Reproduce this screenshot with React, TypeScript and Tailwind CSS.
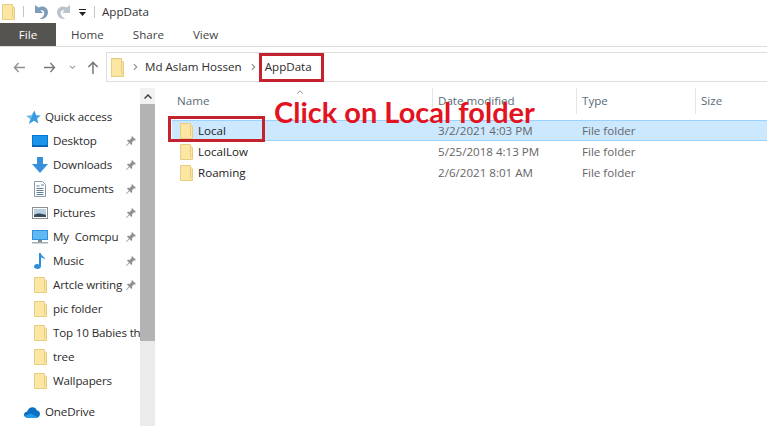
import React from "react";

const Folder = ({ className = "" }: { className?: string }) => (
  <svg viewBox="0 0 13 16" preserveAspectRatio="none" className={className}>
    <path d="M.5.5h10v2l2 1v12H.5z" fill="#fbe7a3" stroke="#e8cd80" />
    <path d="M10.500 2.500v10l2 1" stroke="#e8cd80" fill="none" />
  </svg>
);

const Pin = () => (
  <svg viewBox="0 0 12 12" className="w-[12px] h-[12px]">
    <path d="M7 1l4 4-1 .6-1-.3-2 2 .2 2L6.400 10 4.500 8 1.500 11 1 10.500 4 7.500 2 5.600l.7-.8 2 .2 2-2-.3-1z" fill="#8f8f8f" />
  </svg>
);

const Desktop = () => (
  <svg viewBox="0 0 16 12" className="w-4 h-3">
    <rect width="16" height="12" fill="#0078d7" />
    <rect x="1" y="1" width="14" height="9" fill="#1a94e8" />
    <rect x="0" y="10.500" width="16" height="1.500" fill="#0a5fa8" />
  </svg>
);
const Downloads = () => (
  <svg viewBox="0 0 16 16" className="w-4 h-4">
    <path d="M5 0h6v7h5l-8 9-8-9h5z" fill="#3a8fdc" />
  </svg>
);
const Documents = () => (
  <svg viewBox="0 0 12 16" className="w-3 h-4">
    <path d="M.5.5h8l3 3v12H.5z" fill="#fff" stroke="#8a9aa8" />
    <path d="M2.500 5h3M2.500 7.500h7M2.500 9.500h7M2.500 11.500h7M2.500 13.500h7M7 4h3" stroke="#5d7f98" />
  </svg>
);
const Pictures = () => (
  <svg viewBox="0 0 16 12" className="w-4 h-3">
    <rect x=".5" y=".5" width="15" height="11" fill="#fff" stroke="#8a8f94" />
    <rect x="2" y="2" width="12" height="8" fill="#b9cfe2" />
    <path d="M2 8c3-2 6-2 12 0v2H2z" fill="#3b4a58" />
  </svg>
);
const Computer = () => (
  <svg viewBox="0 0 16 14" className="w-4 h-[14px]">
    <rect width="16" height="10" fill="#2f8fdc" />
    <rect x="1" y="1" width="14" height="8" fill="#62b8f0" />
    <rect x="6" y="10" width="4" height="2" fill="#7d8b96" />
    <rect x="0" y="12" width="16" height="1.500" fill="#a0adb6" />
  </svg>
);
const Music = () => (
  <svg viewBox="0 0 12 16" className="w-3 h-4">
    <path d="M5 0h1.800c.2 3 4.200 3.500 4.200 7-1-1.500-2.500-2.500-4-2.500V13c0 2-1.500 3-3.500 3S0 15 0 13.500 1.500 11 3 11c.8 0 1.500.2 2 .6z" fill="#2b8fdc" />
  </svg>
);
const Star = () => (
  <svg viewBox="0 0 16 16" className="w-[15px] h-[15px]">
    <path d="M9 .5l1.800 5 5 .3-4 3.200 1.400 5.500L8.500 11.500 3 15l1.800-5.500L.5 6.300l5.500-.5z" fill="#3a9be0" />
    <path d="M9 .5L6 5.800.5 6.300 4.800 9.500 3 15z" fill="#6fb9ea" />
  </svg>
);
const Cloud = () => (
  <svg viewBox="0 0 17 11" className="w-4 h-[11px]">
    <path d="M4 11C1.500 11 0 9.500 0 7.800 0 6 1.500 4.800 3.300 4.800 4 2 6.300 0 9 0c2.300 0 4 1.300 4.800 3.500 1.800.2 3.200 1.700 3.200 3.700S15.500 11 13.500 11z" fill="#0d6fc4" />
    <path d="M4 11C2 11 1 10 .6 9.200L7 6.500l8 4a3 3 0 0 1-1.500.5z" fill="#1f9ce8" />
  </svg>
);
const Undo = ({ color, className = "" }: { color: string; className?: string }) => (
  <svg viewBox="0 0 14 16" className={`w-[14px] h-[16px] ${className}`}>
    <path d="M1 1v8h8L6.500 6.500C9 5.500 11 8 10 10.500 9.500 12.500 7.500 14 5.500 15c5 .8 8.500-2.500 8.500-7C14 3.500 9 .8 4.500 3.500z" fill={color} />
  </svg>
);

const folderIcon = <Folder className="w-[13px] h-[16px]" />;

const nav: { label: string; icon: React.ReactNode; pin?: boolean }[] = [
  { label: "Desktop", icon: <Desktop />, pin: true },
  { label: "Downloads", icon: <Downloads />, pin: true },
  { label: "Documents", icon: <Documents />, pin: true },
  { label: "Pictures", icon: <Pictures />, pin: true },
  { label: "My  Comcpu", icon: <Computer />, pin: true },
  { label: "Music", icon: <Music />, pin: true },
  { label: "Artcle writing", icon: folderIcon, pin: true },
  { label: "pic folder", icon: folderIcon },
  { label: "Top 10 Babies th", icon: folderIcon },
  { label: "tree", icon: folderIcon },
  { label: "Wallpapers", icon: folderIcon },
];

const rows = [
  { name: "Local", date: "3/2/2021 4:03 PM", selected: true },
  { name: "LocalLow", date: "5/25/2018 4:13 PM" },
  { name: "Roaming", date: "2/6/2021 8:01 AM" },
];

const Chevron = () => (
  <svg viewBox="0 0 6 8" className="w-[5px] h-[8px]">
    <path d="M1 .5L4.500 4 1 7.500" stroke="#8a8a8a" strokeWidth="1.300" fill="none" />
  </svg>
);

export default function App() {
  return (
    <div className="relative w-[767px] h-[426px] overflow-hidden bg-white text-[11.6px] text-[#2b2b2b] font-['Open_Sans','Noto_Sans',sans-serif]">
      {/* Title bar */}
      <div className="h-[23px] flex items-center">
        <Folder className="w-[13px] h-[16px] ml-[2px]" />
        <div className="w-px h-[11px] bg-[#c4c4c4] ml-[8px]" />
        <Undo color="#7f9db9" className="ml-[10px]" />
        <Undo color="#b9c4ce" className="ml-[9px] -scale-x-100" />
        <svg viewBox="0 0 8 8" className="w-[8px] h-[8px] ml-[8px] mt-[3px]">
          <path d="M0 0h7v1H0zM0 3h7L3.500 7z" fill="#222" />
        </svg>
        <div className="w-px h-[12px] bg-[#c4c4c4] ml-[7px]" />
        <span className="ml-[7px] text-[#333]">AppData</span>
      </div>
      {/* Ribbon tabs */}
      <div className="h-[24px] flex items-center border-b border-[#dcdcdc] text-[#444]">
        <div className="w-[56px] h-full bg-[#565451] text-white flex items-center justify-center">File</div>
        <span className="ml-[15px]">Home</span>
        <span className="ml-[29px]">Share</span>
        <span className="ml-[29px]">View</span>
      </div>
      {/* Address row */}
      <div className="h-[41px] pt-[5px]">
        <div className="h-[30px] flex items-center">
          <svg viewBox="0 0 14 12" className="w-[13px] h-[11px] ml-[13px]">
            <path d="M6 1L1.500 6 6 11M1.500 6H13" stroke="#8f8f8f" strokeWidth="1.500" fill="none" />
          </svg>
          <svg viewBox="0 0 14 12" className="w-[13px] h-[11px] ml-[17px]">
            <path d="M8 1l4.500 5L8 11M12.500 6H1" stroke="#777" strokeWidth="1.500" fill="none" />
          </svg>
          <svg viewBox="0 0 8 6" className="w-[7px] h-[5px] ml-[13px]">
            <path d="M1 1l3 3 3-3" stroke="#999" strokeWidth="1.300" fill="none" />
          </svg>
          <svg viewBox="0 0 12 14" className="w-[12px] h-[13px] ml-[11px]">
            <path d="M1 6.500L6 1.500l5 5M6 1.500V14" stroke="#777" strokeWidth="1.600" fill="none" />
          </svg>
          <div className="ml-[7px] flex-1 h-[30px] flex items-center border border-r-0 border-[#dedede]">
            <Folder className="w-[13px] h-[19px] ml-[4px]" />
            <span className="ml-[9px]"><Chevron /></span>
            <span className="ml-[7px]">Md Aslam Hossen</span>
            <span className="ml-[9px]"><Chevron /></span>
            <span className="ml-[9px]">AppData</span>
          </div>
        </div>
      </div>
      {/* Body */}
      <div className="flex h-[338px]">
        {/* Navigation */}
        <div className="w-[140px] pt-[17px] shrink-0 tracking-[-0.15px]">
          <div className="h-[24px] flex items-center pl-[26px]">
            <Star />
            <span className="ml-[4px]">Quick access</span>
          </div>
          {nav.map((n) => (
            <div key={n.label} className="h-[24px] flex items-center relative">
              <span className="w-[16px] ml-[32px] flex justify-center">{n.icon}</span>
              <span className="ml-[5px] whitespace-pre overflow-hidden w-[87px]">{n.label}</span>
              {n.pin && (
                <span className="absolute left-[125px] top-[6px]">
                  <Pin />
                </span>
              )}
            </div>
          ))}
          <div className="h-[24px] flex items-center pl-[24px] mt-[7px]">
            <Cloud />
            <span className="ml-[5px]">OneDrive</span>
          </div>
        </div>
        {/* Scrollbar */}
        <div className="w-[15px] shrink-0 bg-[#ebebeb] flex flex-col">
          <div className="h-[16px] flex items-center justify-center bg-[#f2f2f2]">
            <svg viewBox="0 0 8 5" className="w-[8px] h-[5px]">
              <path d="M.5 4.500L4 1l3.500 3.500" stroke="#444" strokeWidth="1.500" fill="none" />
            </svg>
          </div>
          <div className="h-[237px] bg-[#b3b3b3]" />
        </div>
        {/* File list */}
        <div className="flex-1 relative">
          <div className="h-[32px] flex items-start text-[#5a6b78]">
            <div className="w-[22px] h-[26px]" />
            <div className="w-[255px] h-[26px] flex items-center">Name</div>
            <div className="w-[144px] pl-[5px] h-[26px] flex items-center border-l border-[#e5e5e5]">Date modified</div>
            <div className="w-[119px] pl-[5px] h-[26px] flex items-center border-l border-[#e5e5e5]">Type</div>
            <div className="pl-[5px] h-[26px] flex items-center border-l border-[#e5e5e5]">Size</div>
          </div>
          {/* header sort caret */}
          <svg viewBox="0 0 8 5" className="absolute left-[141px] top-[2px] w-[8px] h-[4px]">
            <path d="M.5 4.500L4 1l3.500 3.500" stroke="#777" fill="none" />
          </svg>
          {rows.map((r) => (
            <div
              key={r.name}
              className={`h-[21px] ml-[17px] flex items-center ${
                r.selected ? "bg-[#cce8ff] border-y border-[#99d1ff]" : ""
              }`}
            >
              <span className="ml-[8px]">{folderIcon}</span>
              <span className="ml-[5px] w-[240px] text-[#222]">{r.name}</span>
              <span className="w-[144px] text-[#666]">{r.date}</span>
              <span className="text-[#666]">File folder</span>
            </div>
          ))}
        </div>
      </div>
      {/* Annotations */}
      <div className="absolute left-[259px] top-[53px] w-[65px] h-[29px] border-[3px] border-[#c4222f]" />
      <div className="absolute left-[168px] top-[116px] w-[97px] h-[26px] border-[3px] border-[#c4222f]" />
      <div className="absolute left-[274px] top-[93px] text-[#e3131f] text-[29px] leading-[38px] font-bold font-['Lato',sans-serif] whitespace-nowrap">
        Click on Local folder
      </div>
    </div>
  );
}
